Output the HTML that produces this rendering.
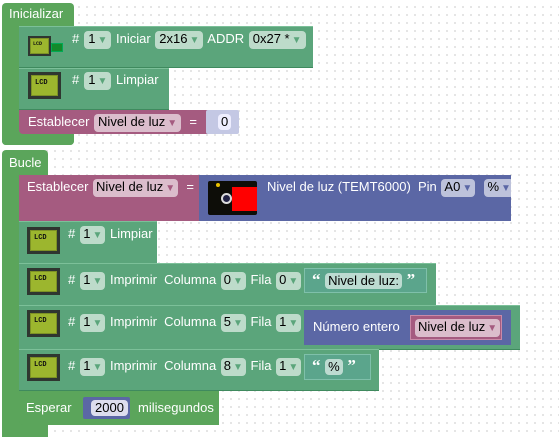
<!DOCTYPE html>
<html><head><meta charset="utf-8"><style>
body{margin:0;width:559px;height:438px;overflow:hidden;background:#fff;
background-image:radial-gradient(circle,#e0e0e0 0.8px,transparent 1.2px);background-size:8px 8px;background-position:3px 3px;
font-family:"Liberation Sans",sans-serif;font-size:13px;color:#fff;position:relative}
.b{position:absolute}
.g{background:#5ba55b}
.l{background:#5ba57b;border-top:1px solid #7cc099;border-bottom:1px solid #3f8a5e;box-sizing:border-box}
.p{background:#a55b80}
.v{background:#5b67a5}
.t{background:#5ba58c;border:1px solid #7fc0aa;box-sizing:border-box}
.tx{position:absolute;white-space:nowrap;line-height:16px}
.f{display:inline-block;background:rgba(255,255,255,.6);color:#000;border-radius:4px;padding:0 3px;line-height:16px;margin:0 1px}
.w .f{padding:0 4px}
.f i{font-style:normal;color:#5ba57b;font-size:10px;margin-left:2px}
.pf i{color:#a55b80}
.vf i{color:#5b67a5}
.q{font-family:"Liberation Serif",serif;font-size:17px;font-weight:bold}
.lcd{position:absolute;width:33px;height:27px;background:#2f3630;box-sizing:border-box;padding:3px}
.lcd div{width:100%;height:100%;background:#9cb62e;border:1px solid #7d9225;box-sizing:border-box;color:#111;font-family:"Liberation Mono",monospace;font-size:7px;font-weight:bold;padding:3px 0 0 3px}
</style></head><body>
<!-- Inicializar -->
<div class="b g" style="left:2px;top:3px;width:72px;height:142px;border-radius:4px"></div>
<div class="tx" style="left:9px;top:6px">Inicializar</div>
<div class="b l" style="left:19px;top:26px;width:294px;height:42px"></div>
<div class="lcd" style="left:28px;top:36px;width:23px;height:20px;padding:2px"><div style="font-size:5px;padding:2px 0 0 2px">LCD</div></div>
<div class="b" style="left:51px;top:43px;width:10px;height:7px;background:#138a2a;border:1px solid #0a5;font-size:3px"></div>
<div class="tx w" style="left:72px;top:31px">#<span class="f" style="margin-left:5px">1<i>▼</i></span> Iniciar <span class="f">2x16<i>▼</i></span> ADDR <span class="f">0x27 *<i>▼</i></span></div>
<div class="b l" style="left:19px;top:68px;width:150px;height:42px"></div>
<div class="lcd" style="left:28px;top:72px"><div>LCD</div></div>
<div class="tx w" style="left:72px;top:72px">#<span class="f" style="margin-left:5px">1<i>▼</i></span> Limpiar</div>
<div class="b p" style="left:19px;top:110px;width:193px;height:24px;border-bottom-left-radius:4px"></div>
<div class="b" style="left:206px;top:110px;width:33px;height:24px;background:#c4c8e4;border-radius:2px"></div>
<div class="tx w" style="left:28px;top:114px">Establecer <span class="f pf">Nivel de luz<i>▼</i></span> &nbsp;= </div>
<div class="tx f" style="left:217px;top:114px;background:#eef">0</div>
<div class="b g" style="left:2px;top:134px;width:72px;height:11px;border-radius:0 0 4px 4px"></div>

<!-- Bucle -->
<div class="b g" style="left:2px;top:150px;width:46px;height:287px;border-radius:4px 4px 0 0"></div>
<div class="tx" style="left:9px;top:155px">Bucle</div>
<div class="b p" style="left:19px;top:175px;width:181px;height:46px"></div>
<div class="tx" style="left:27px;top:179px">Establecer <span class="f pf">Nivel de luz<i>▼</i></span> &nbsp;=</div>
<div class="b v" style="left:199px;top:175px;width:312px;height:46px"></div>
<div class="b" style="left:208px;top:181px;width:49px;height:34px;background:#0d0d08;border-radius:2px"></div>
<div class="b" style="left:232px;top:187px;width:25px;height:24px;background:#f00"></div>
<div class="b" style="left:221px;top:193px;width:7px;height:7px;border-radius:50%;border:2px solid #ddd;background:#224"></div>
<div class="b" style="left:216px;top:183px;width:4px;height:4px;border-radius:50%;background:#e8c000"></div>
<div class="tx" style="left:267px;top:179px">Nivel de luz (TEMT6000) &nbsp;Pin <span class="f vf">A0<i>▼</i></span> &nbsp;<span class="f vf">%<i>▼</i></span></div>

<div class="b l" style="left:19px;top:221px;width:138px;height:43px"></div>
<div class="lcd" style="left:27px;top:227px"><div>LCD</div></div>
<div class="tx" style="left:68px;top:226px">#<span class="f" style="margin-left:5px">1<i>▼</i></span> Limpiar</div>

<div class="b l" style="left:19px;top:263px;width:417px;height:43px"></div>
<div class="lcd" style="left:27px;top:268px"><div>LCD</div></div>
<div class="tx" style="left:68px;top:272px">#<span class="f" style="margin-left:5px">1<i>▼</i></span> Imprimir &nbsp;Columna <span class="f">0<i>▼</i></span> Fila <span class="f">0<i>▼</i></span></div>
<div class="b t" style="left:304px;top:268px;width:123px;height:25px"></div>
<div class="tx" style="left:312px;top:272px"><span class="q">“</span> <span class="f">Nivel de luz:</span> <span class="q">”</span></div>

<div class="b l" style="left:19px;top:305px;width:501px;height:45px"></div>
<div class="lcd" style="left:27px;top:310px"><div>LCD</div></div>
<div class="tx" style="left:68px;top:314px">#<span class="f" style="margin-left:5px">1<i>▼</i></span> Imprimir &nbsp;Columna <span class="f">5<i>▼</i></span> Fila <span class="f">1<i>▼</i></span></div>
<div class="b v" style="left:304px;top:310px;width:207px;height:35px"></div>
<div class="tx" style="left:313px;top:319px">Número entero</div>
<div class="b p" style="left:410px;top:315px;width:92px;height:25px;border:1px solid #c98aa8;box-sizing:border-box"></div>
<div class="tx" style="left:414px;top:319px"><span class="f pf">Nivel de luz<i>▼</i></span></div>

<div class="b l" style="left:19px;top:349px;width:360px;height:42px"></div>
<div class="lcd" style="left:27px;top:354px"><div>LCD</div></div>
<div class="tx" style="left:68px;top:358px">#<span class="f" style="margin-left:5px">1<i>▼</i></span> Imprimir &nbsp;Columna <span class="f">8<i>▼</i></span> Fila <span class="f">1<i>▼</i></span></div>
<div class="b t" style="left:304px;top:354px;width:67px;height:26px"></div>
<div class="tx" style="left:312px;top:358px"><span class="q">“</span> <span class="f">%</span> <span class="q">”</span></div>

<div class="b g" style="left:19px;top:391px;width:200px;height:34px;border-bottom-left-radius:4px"></div>
<div class="b" style="left:83px;top:397px;width:47px;height:22px;background:#5b67a5;border-radius:2px"></div>
<div class="tx" style="left:26px;top:400px">Esperar</div>
<div class="tx f" style="left:90px;top:400px;background:#dde;padding:0 4px">2000</div>
<div class="tx" style="left:138px;top:400px">milisegundos</div>
</body></html>
